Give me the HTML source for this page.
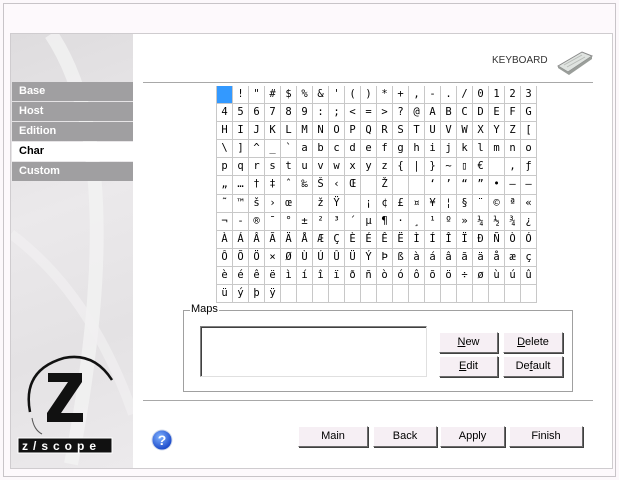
<!DOCTYPE html>
<html><head><meta charset="utf-8"><style>
*{box-sizing:border-box;margin:0;padding:0}
body{width:619px;height:480px;background:#fcf8fb;position:relative;overflow:hidden;font-family:"Liberation Sans",sans-serif}
.abs{position:absolute}
#outer{left:3px;top:3px;width:613px;height:474px;border:1px solid #c8c4c8;background:#fdf9fc}
#panel{left:10px;top:33px;width:603px;height:436px;border:1px solid #cfcccf;background:#fff}
#side{left:11px;top:34px;width:122px;height:434px;background:linear-gradient(160deg,#dedcde 0%,#ebe9eb 40%,#e4e2e4 70%,#eceaec 100%)}
.mi{position:absolute;left:12px;width:121px;height:19px;background:#a09fa1;color:#fff;font-weight:bold;font-size:11px;line-height:19px;padding-left:7px}
.hr{position:absolute;height:1px;background:#a8a8a8}
#grid{left:216px;top:86px;display:grid;grid-template-columns:repeat(20,16px);grid-auto-rows:18.1px;border-left:1px solid #c8c8c8}
#grid div{border-right:1px solid #c8c8c8;border-bottom:1px solid #c8c8c8;font-family:"DejaVu Sans Mono",monospace;font-size:10.5px;text-align:center;line-height:17px;color:#000}
.btn{position:absolute;height:21px;background:#f6eff4;border:1px solid;border-color:#fff #6a6a6a #6a6a6a #fff;box-shadow:1px 1px 0 #404040;font-size:11px;line-height:19px;text-align:center;color:#000}
</style></head><body>
<div class="abs" id="outer"></div>
<div class="abs" id="panel"></div>
<div class="abs" id="side">
<svg width="122" height="434" style="position:absolute;left:0;top:0">
<path d="M40 0 Q120 120 60 430" stroke="#f3f2f3" stroke-width="14" fill="none" opacity=".8"/>
<path d="M0 200 Q80 260 122 380" stroke="#f1f0f1" stroke-width="10" fill="none" opacity=".7"/>
</svg>
</div>
<div class="mi" style="top:82px">Base</div>
<div class="mi" style="top:102px">Host</div>
<div class="mi" style="top:122px">Edition</div>
<div class="mi" style="top:142px;background:#fff;color:#000">Char</div>
<div class="mi" style="top:162px">Custom</div>

<div class="abs" style="left:492px;top:55px;font-size:10px;color:#333">KEYBOARD</div>
<svg class="abs" style="left:556px;top:48px" width="38" height="28"><path d="M2 18 L26 4 L36 8 L12 24 Z" fill="#dfe3e0" stroke="#888"/><path d="M12 24 L36 8 L36 11 L13 27 L2 20 L2 18 Z" fill="#9a9e9a"/><path d="M8 17 L26 7 M11 19 L29 9" stroke="#b8bcb8"/></svg>
<div class="hr" style="left:143px;top:82px;width:450px"></div>

<div class="abs" id="grid">
<div style="background:#3399ff"></div><div>!</div><div>"</div><div>#</div><div>$</div><div>%</div><div>&amp;</div><div>'</div><div>(</div><div>)</div><div>*</div><div>+</div><div>,</div><div>-</div><div>.</div><div>/</div><div>0</div><div>1</div><div>2</div><div>3</div>
<div>4</div><div>5</div><div>6</div><div>7</div><div>8</div><div>9</div><div>:</div><div>;</div><div>&lt;</div><div>=</div><div>&gt;</div><div>?</div><div>@</div><div>A</div><div>B</div><div>C</div><div>D</div><div>E</div><div>F</div><div>G</div>
<div>H</div><div>I</div><div>J</div><div>K</div><div>L</div><div>M</div><div>N</div><div>O</div><div>P</div><div>Q</div><div>R</div><div>S</div><div>T</div><div>U</div><div>V</div><div>W</div><div>X</div><div>Y</div><div>Z</div><div>[</div>
<div>\</div><div>]</div><div>^</div><div>_</div><div>`</div><div>a</div><div>b</div><div>c</div><div>d</div><div>e</div><div>f</div><div>g</div><div>h</div><div>i</div><div>j</div><div>k</div><div>l</div><div>m</div><div>n</div><div>o</div>
<div>p</div><div>q</div><div>r</div><div>s</div><div>t</div><div>u</div><div>v</div><div>w</div><div>x</div><div>y</div><div>z</div><div>{</div><div>|</div><div>}</div><div>~</div><div>▯</div><div>€</div><div></div><div>‚</div><div>ƒ</div>
<div>„</div><div>…</div><div>†</div><div>‡</div><div>ˆ</div><div>‰</div><div>Š</div><div>‹</div><div>Œ</div><div></div><div>Ž</div><div></div><div></div><div>‘</div><div>’</div><div>“</div><div>”</div><div>•</div><div>–</div><div>—</div>
<div>˜</div><div>™</div><div>š</div><div>›</div><div>œ</div><div></div><div>ž</div><div>Ÿ</div><div></div><div>¡</div><div>¢</div><div>£</div><div>¤</div><div>¥</div><div>¦</div><div>§</div><div>¨</div><div>©</div><div>ª</div><div>«</div>
<div>¬</div><div>-</div><div>®</div><div>¯</div><div>°</div><div>±</div><div>²</div><div>³</div><div>´</div><div>µ</div><div>¶</div><div>·</div><div>¸</div><div>¹</div><div>º</div><div>»</div><div>¼</div><div>½</div><div>¾</div><div>¿</div>
<div>À</div><div>Á</div><div>Â</div><div>Ã</div><div>Ä</div><div>Å</div><div>Æ</div><div>Ç</div><div>È</div><div>É</div><div>Ê</div><div>Ë</div><div>Ì</div><div>Í</div><div>Î</div><div>Ï</div><div>Ð</div><div>Ñ</div><div>Ò</div><div>Ó</div>
<div>Ô</div><div>Õ</div><div>Ö</div><div>×</div><div>Ø</div><div>Ù</div><div>Ú</div><div>Û</div><div>Ü</div><div>Ý</div><div>Þ</div><div>ß</div><div>à</div><div>á</div><div>â</div><div>ã</div><div>ä</div><div>å</div><div>æ</div><div>ç</div>
<div>è</div><div>é</div><div>ê</div><div>ë</div><div>ì</div><div>í</div><div>î</div><div>ï</div><div>ð</div><div>ñ</div><div>ò</div><div>ó</div><div>ô</div><div>õ</div><div>ö</div><div>÷</div><div>ø</div><div>ù</div><div>ú</div><div>û</div>
<div>ü</div><div>ý</div><div>þ</div><div>ÿ</div><div></div><div></div><div></div><div></div><div></div><div></div><div></div><div></div><div></div><div></div><div></div><div></div><div></div><div></div><div></div><div></div>
</div>

<div class="abs" style="left:183px;top:310px;width:390px;height:82px;border:1px solid #a0a0a0"></div>
<div class="abs" style="left:190px;top:303px;font-size:11px;background:#fff;padding:0 1px;color:#000">Maps</div>
<div class="abs" style="left:200px;top:326px;width:227px;height:51px;border:1px solid;border-color:#808080 #e0e0e0 #e0e0e0 #808080;background:#fff;box-shadow:inset 1px 1px 0 #404040"></div>
<div class="btn" style="left:439px;top:332px;width:59px"><u>N</u>ew</div>
<div class="btn" style="left:503px;top:332px;width:60px"><u>D</u>elete</div>
<div class="btn" style="left:439px;top:356px;width:59px"><u>E</u>dit</div>
<div class="btn" style="left:503px;top:356px;width:60px">De<u>f</u>ault</div>

<div class="hr" style="left:143px;top:400px;width:450px"></div>

<svg class="abs" style="left:151px;top:428px" width="24" height="24"><defs><radialGradient id="g" cx="40%" cy="35%" r="65%"><stop offset="0" stop-color="#7fb2ff"/><stop offset="1" stop-color="#1846c8"/></radialGradient></defs><circle cx="11" cy="12" r="10" fill="url(#g)" stroke="#cfd8ea"/><text x="11" y="17" font-family="Liberation Sans" font-weight="bold" font-size="14" fill="#fff" text-anchor="middle">?</text></svg>

<div class="btn" style="left:298px;top:426px;width:70px">Main</div>
<div class="btn" style="left:373px;top:426px;width:64px">Back</div>
<div class="btn" style="left:440px;top:426px;width:65px">Apply</div>
<div class="btn" style="left:509px;top:426px;width:74px">Finish</div>

<svg class="abs" style="left:14px;top:350px" width="110" height="110">
<path d="M16 62 Q8 20 50 8 Q80 2 98 30" stroke="#111" stroke-width="2.5" fill="none"/>
<path d="M18 68 Q20 80 28 84" stroke="#555" stroke-width="1" fill="none"/>
<path d="M34 23 H68 V32 L47 63 H69 V72 H33 V63 L54 32 H34 Z" fill="#111"/>
<rect x="4" y="88" width="94" height="15" fill="#111" stroke="#fff" stroke-width="1"/>
<text x="8" y="100" font-family="Liberation Sans" font-weight="bold" font-size="12" fill="#fff" letter-spacing="5">z/scope</text>
</svg>
</body></html>
